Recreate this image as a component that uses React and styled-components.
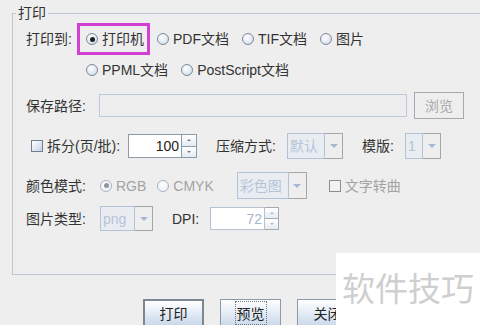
import React from 'react'
import styled, { createGlobalStyle, css } from 'styled-components'

const GlobalStyle = createGlobalStyle`
  html, body {
    margin: 0;
    padding: 0;
    background: #eeeeee;
  }
  body {
    font-family: "Liberation Sans", "Noto Sans CJK SC", sans-serif;
    font-size: 14px;
    color: #333333;
  }
`

const Window = styled.div`
  position: relative;
  width: 480px;
  height: 325px;
  overflow: hidden;
  background: #eeeeee;
`

const Group = styled.div`
  position: relative;
  box-sizing: border-box;
  margin: 13px 0 0 12px;
  width: 560px;
  height: 262px;
  border: 1px solid #bcc8d6;
  padding: 12px 0 0 13px;
`

const GroupTitle = styled.span`
  position: absolute;
  top: -9px;
  left: 3px;
  padding: 0 2px;
  background: #eeeeee;
  line-height: 16px;
  color: #333;
`

const Row = styled.div`
  display: flex;
  align-items: center;
  height: ${p => p.$h || 26}px;
  margin-top: ${p => p.$mt || 0}px;
  padding-left: ${p => p.$pl || 0}px;
  white-space: nowrap;
  line-height: 1;
`

const Label = styled.span`
  display: inline-block;
  flex: none;
  width: ${p => p.$w}px;
  margin-left: ${p => p.$ml || 0}px;
  color: #333;
`

const Options = styled.div`
  display: flex;
  align-items: center;
  gap: 13px;
`

const Option = styled.label`
  display: flex;
  align-items: center;
  gap: 4px;
  margin-left: ${p => p.$ml || 0}px;
  color: ${p => (p.$disabled ? '#a3a3a3' : '#333')};
  ${p => p.$marked && css`
    padding: 6px 3px 6px 6px;
    margin: -6px -3px -6px -6px;
    outline: 3px solid #d23fd2;
  `}
`

const RadioDot = styled.span`
  position: relative;
  flex: none;
  box-sizing: border-box;
  width: 12px;
  height: 12px;
  border-radius: 50%;
  border: 1px solid ${p => (p.$disabled ? '#a9b3bf' : '#7d8b9b')};
  background: ${p => (p.$disabled
    ? 'radial-gradient(circle at 40% 35%, #ffffff 0%, #e8ecf1 100%)'
    : 'radial-gradient(circle at 40% 35%, #ffffff 0%, #dfe7f1 60%, #b9c9dc 100%)')};
  &::after {
    content: '';
    display: ${p => (p.$checked ? 'block' : 'none')};
    position: absolute;
    left: 2.5px;
    top: 2.5px;
    width: 5px;
    height: 5px;
    border-radius: 50%;
    background: ${p => (p.$disabled ? '#8e959d' : '#1e1e1e')};
  }
`

const CheckBox = styled.span`
  flex: none;
  box-sizing: border-box;
  width: 12px;
  height: 12px;
  border: 1px solid ${p => (p.$disabled ? '#8d8d8d' : '#6f7f91')};
  background: ${p => (p.$disabled
    ? '#f2f2f2'
    : 'linear-gradient(135deg, #ffffff 0%, #dbe4ef 60%, #c3d2e3 100%)')};
`

const TextField = styled.div`
  box-sizing: border-box;
  width: ${p => p.$w}px;
  height: 23px;
  border: 1px solid #bccadb;
  background: #eeeeee;
`

const Button = styled.div`
  box-sizing: border-box;
  display: flex;
  align-items: center;
  justify-content: center;
  flex: none;
  width: ${p => p.$w || 61}px;
  height: ${p => p.$h || 28}px;
  margin-left: ${p => p.$ml || 0}px;
  border: ${p => (p.$default ? '2px solid #7d8794' : '1px solid #8c99a8')};
  background: linear-gradient(180deg, #ffffff 0%, #e6eef7 45%, #c9d8ea 100%);
  color: #222;
  ${p => p.$disabled && css`
    border: 1px solid #a8a8a8;
    background: #eeeeee;
    color: #a9a9a9;
  `}
`

const FocusText = styled.span`
  padding: 1px 1px;
  outline: 1px dotted #6b7480;
`

const SpinBox = styled.div`
  display: flex;
  flex: none;
  width: ${p => p.$w}px;
  height: ${p => p.$h || 24}px;
  margin-left: ${p => p.$ml || 0}px;
`

const SpinField = styled.div`
  box-sizing: border-box;
  flex: 1;
  display: flex;
  align-items: center;
  justify-content: flex-end;
  padding-right: 2px;
  border: 1px solid ${p => (p.$disabled ? '#b6c2d0' : '#8e9aa7')};
  background: #ffffff;
  color: ${p => (p.$disabled ? '#a6b6ca' : '#222')};
`

const SpinArrows = styled.div`
  display: flex;
  flex-direction: column;
  width: ${p => p.$w || 15}px;
`

const SpinHalf = styled.div`
  box-sizing: border-box;
  flex: 1;
  display: flex;
  align-items: center;
  justify-content: center;
  border: 1px solid ${p => (p.$disabled ? '#a9a9a9' : '#8e9aa7')};
  border-left: none;
  ${p => p.$down && 'border-top: none;'}
  background: linear-gradient(180deg, #ffffff 0%, #e4ebf3 100%);
`

const Tri = styled.span`
  width: 0;
  height: 0;
  border-left: ${p => p.$s || 2}px solid transparent;
  border-right: ${p => p.$s || 2}px solid transparent;
  ${p => (p.$up
    ? `border-bottom: ${p.$s || 2}px solid ${p.$c || '#6d7886'};`
    : `border-top: ${p.$s || 2}px solid ${p.$c || '#6d7886'};`)}
`

const Combo = styled.div`
  display: flex;
  flex: none;
  width: ${p => p.$w}px;
  height: ${p => p.$h || 26}px;
  margin-left: ${p => p.$ml || 0}px;
`

const ComboField = styled.div`
  box-sizing: border-box;
  flex: 1;
  display: flex;
  align-items: center;
  padding-left: 2px;
  border: 1px solid #b3c3d7;
  background: #e9edf2;
  color: #b5c4d6;
`

const ComboArrow = styled.div`
  box-sizing: border-box;
  display: flex;
  align-items: center;
  justify-content: center;
  width: 18px;
  border: 1px solid #a6a6a6;
  border-left: none;
  background: #eeeeee;
`

const ButtonBar = styled.div`
  display: flex;
  gap: 16px;
  margin-top: 24px;
  padding-left: 143px;
`

const Watermark = styled.div`
  position: absolute;
  right: 0;
  bottom: 0;
  width: 144px;
  height: 72px;
  background: #ffffff;
  display: flex;
  align-items: center;
  justify-content: center;
  font-family: "Noto Sans CJK SC", sans-serif;
  font-size: 33px;
  color: #cfcfcf;
  padding-bottom: 4px;
  box-sizing: border-box;
`

const Radio = ({ label, checked, disabled, marked, ml }) => (
  <Option $disabled={disabled} $marked={marked} $ml={ml}>
    <RadioDot $checked={checked} $disabled={disabled} />
    {label}
  </Option>
)

const Spinner = ({ value, w, h, ml, disabled }) => (
  <SpinBox $w={w} $h={h} $ml={ml}>
    <SpinField $disabled={disabled}>{value}</SpinField>
    <SpinArrows $w={disabled ? 14 : 15}>
      <SpinHalf $disabled={disabled}><Tri $up $c={disabled ? '#b0b8c2' : '#6d7886'} /></SpinHalf>
      <SpinHalf $down $disabled={disabled}><Tri $c={disabled ? '#b0b8c2' : '#6d7886'} /></SpinHalf>
    </SpinArrows>
  </SpinBox>
)

const Select = ({ value, w, h, ml }) => (
  <Combo $w={w} $h={h} $ml={ml}>
    <ComboField>{value}</ComboField>
    <ComboArrow><Tri $s={4} $c="#a3b8d1" /></ComboArrow>
  </Combo>
)

const App = () => {
  return (
    <Window>
      <GlobalStyle />
      <Group>
        <GroupTitle>打印</GroupTitle>
        <Row>
          <Label $w={60}>打印到:</Label>
          <Options>
            <Radio label="打印机" checked marked />
            <Radio label="PDF文档" />
            <Radio label="TIF文档" />
            <Radio label="图片" />
          </Options>
        </Row>
        <Row $mt={5} $pl={60}>
          <Options>
            <Radio label="PPML文档" />
            <Radio label="PostScript文档" />
          </Options>
        </Row>
        <Row $mt={9} $h={27}>
          <Label $w={73}>保存路径:</Label>
          <TextField $w={308} />
          <Button $w={50} $h={27} $ml={7} $disabled>浏览</Button>
        </Row>
        <Row $mt={14} $pl={5}>
          <Option>
            <CheckBox />
            拆分(页/批):
          </Option>
          <Spinner value="100" w={69} ml={8} />
          <Label $w={71} $ml={19}>压缩方式:</Label>
          <Select value="默认" w={56} />
          <Label $w={43} $ml={19}>模版:</Label>
          <Select value="1" w={36} />
        </Row>
        <Row $mt={13} $h={27}>
          <Label $w={74}>颜色模式:</Label>
          <Radio label="RGB" checked disabled />
          <Radio label="CMYK" disabled ml={11} />
          <Select value="彩色图" w={70} h={27} ml={23} />
          <Option $disabled $ml={22}>
            <CheckBox $disabled />
            文字转曲
          </Option>
        </Row>
        <Row $mt={7} $h={25}>
          <Label $w={74}>图片类型:</Label>
          <Select value="png" w={53} h={25} />
          <Label $w={38} $ml={19}>DPI:</Label>
          <Spinner value="72" w={69} h={23} disabled />
        </Row>
      </Group>
      <ButtonBar>
        <Button $default>打印</Button>
        <Button><FocusText>预览</FocusText></Button>
        <Button>关闭</Button>
      </ButtonBar>
      <Watermark>软件技巧</Watermark>
    </Window>
  )
}

export default App
